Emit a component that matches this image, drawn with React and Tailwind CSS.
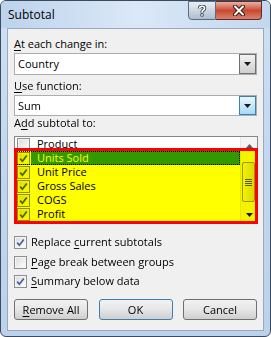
import React from "react";

// Win7-style "Subtotal" dialog with an annotation highlight over the list

const Mn = ({ children }) => <span className="underline underline-offset-[2px]">{children}</span>;

const CheckBox = ({ checked }) => (
  <span className="w-[13px] h-[13px] shrink-0 border border-[#8e8f8f] bg-white flex items-center justify-center">
    <span className="relative w-[11px] h-[11px] border border-[#f4f4f4] bg-gradient-to-br from-[#dedede] to-[#fbfbfb] flex items-center justify-center">
      {checked && (
        <svg width="9" height="9" viewBox="0 0 9 9" className="absolute">
          <polyline points="1.2,4.6 3.4,7.2 7.8,1.4" fill="none" stroke="#4a5f9a" strokeWidth="1.7" />
        </svg>
      )}
    </span>
  </span>
);

const Arrow = ({ up }) => (
  <svg width="7" height="4" viewBox="0 0 7 4">
    <polygon points={up ? "0,4 7,4 3.5,0" : "0,0 7,0 3.5,4"} fill={up ? "#5a5a5a" : "#1a1a1a"} />
  </svg>
);

const Combo = ({ value, focused, h }) => (
  <div className={`flex w-full bg-white border border-[#abadb3] ${h}`}>
    <div className="flex-1 flex items-center pl-[3px]">{value}</div>
    <div
      className={`w-[17px] flex items-center justify-center border ${
        focused
          ? "border-[#3c7fb1] bg-gradient-to-b from-[#eaf6fd] to-[#a7d9f5]"
          : "border-[#707070] bg-gradient-to-b from-[#f2f2f2] to-[#cfcfcf]"
      }`}
    >
      <Arrow />
    </div>
  </div>
);

const Btn = ({ children, primary }) => (
  <button
    className={`w-[74px] h-[21px] rounded-[3px] border ${
      primary ? "border-[#3c7fb1]" : "border-[#707070]"
    } bg-gradient-to-b from-[#f2f2f2] via-[#e6e6e6] to-[#cfcfcf] flex items-center justify-center`}
  >
    {children}
  </button>
);

const items = [
  { label: "Product", checked: false },
  { label: "Units Sold", checked: true, selected: true },
  { label: "Unit Price", checked: true },
  { label: "Gross Sales", checked: true },
  { label: "COGS", checked: true },
  { label: "Profit", checked: true },
];

const Option = ({ checked, children }) => (
  <div className="h-[14px] flex items-center gap-[4px]">
    <CheckBox checked={checked} />
    <span>{children}</span>
  </div>
);

export default function App() {
  return (
    <div className="w-[271px] h-[337px] flex flex-col rounded-[6px] border border-[#3b4a5c] bg-gradient-to-b from-[#cfe0f3] via-[#c2d7ee] to-[#bcd2ea] font-['Open_Sans',sans-serif] text-[11px] leading-[14px] text-black overflow-hidden">
      {/* title bar */}
      <div className="h-[27px] flex items-start justify-between pl-[7px] pr-[8px] bg-gradient-to-r from-[#bcd3ec] via-[#dbe8f7] to-[#c3d7ee]">
        <span className="pt-[7px] text-[12px]">Subtotal</span>
        <div className="flex h-[19px]">
          <div className="w-[28px] h-full border border-[#5b6b80] rounded-bl-[4px] bg-gradient-to-b from-[#e8edf3] via-[#ccd6e2] to-[#aebdcf] flex items-center justify-center">
            <svg width="10" height="12" viewBox="0 0 10 12">
              <path d="M2.5 3.6 C2.5 1.8 3.8 1.2 5 1.2 C6.6 1.2 7.6 2 7.6 3.3 C7.6 5.2 5 5.2 5 7.4" fill="none" stroke="#3b4656" strokeWidth="3.4" />
              <circle cx="5" cy="9.9" r="1.8" fill="#3b4656" />
              <path d="M2.5 3.6 C2.5 1.8 3.8 1.2 5 1.2 C6.6 1.2 7.6 2 7.6 3.3 C7.6 5.2 5 5.2 5 7.4" fill="none" stroke="#fff" strokeWidth="1.6" />
              <circle cx="5" cy="9.9" r="0.9" fill="#fff" />
            </svg>
          </div>
          <div className="w-[46px] h-full border border-l-0 border-[#5e2c24] rounded-br-[4px] bg-gradient-to-b from-[#eab0a2] via-[#c8472f] to-[#d9806d] flex items-center justify-center">
            <svg width="12" height="11" viewBox="0 0 12 11">
              <path d="M2 1.5 L10 9.5 M10 1.5 L2 9.5" stroke="#3a1a14" strokeWidth="4" strokeLinecap="round" />
              <path d="M2 1.5 L10 9.5 M10 1.5 L2 9.5" stroke="#fff" strokeWidth="2" strokeLinecap="round" />
            </svg>
          </div>
        </div>
      </div>

      {/* client area */}
      <div className="flex-1 mx-[6px] mb-[5px] border border-[#98aac0] bg-[#f0f0f0] flex flex-col pt-[8px] px-[6px]">
        <div>
          <Mn>A</Mn>t each change in:
        </div>
        <div className="mt-[2px]">
          <Combo value="Country" h="h-[22px]" />
        </div>
        <div className="mt-[4px]">
          <Mn>U</Mn>se function:
        </div>
        <div className="mt-[2px]">
          <Combo value="Sum" focused h="h-[21px]" />
        </div>
        <div>
          A<Mn>d</Mn>d subtotal to:
        </div>

        <div className="relative mt-[6px] w-[244px] h-[88px] border border-[#828790] bg-white flex">
          <div className="flex-1 flex flex-col pl-[1px]">
            {items.map((it) => (
              <div
                key={it.label}
                className={`h-[14px] flex items-center pl-[1px] ${
                  it.selected ? "outline-1 outline-dotted outline-black -outline-offset-1" : ""
                }`}
              >
                <CheckBox checked={it.checked} />
                <span
                  className={`ml-[1px] h-full flex-1 flex items-center pl-[6px] ${
                    it.selected ? "bg-[#3399ff] text-white" : ""
                  }`}
                >
                  {it.label}
                </span>
              </div>
            ))}
          </div>
          {/* scrollbar */}
          <div className="w-[17px] bg-[#f4f4f4] border-l border-[#e6e6e6] flex flex-col">
            <div className="h-[17px] flex items-center justify-center">
              <Arrow up />
            </div>
            <div className="flex-1 relative">
              <div className="absolute left-[1px] right-[2px] top-[8px] h-[40px] rounded-[2px] border border-[#979797] bg-gradient-to-r from-[#f3f3f3] to-[#d9d9d9] flex flex-col items-center justify-center gap-[1px]">
                <span className="w-[7px] h-px bg-[#5a5a5a]" />
                <span className="w-[7px] h-px bg-[#5a5a5a]" />
                <span className="w-[7px] h-px bg-[#5a5a5a]" />
                <span className="w-[7px] h-px bg-[#5a5a5a]" />
              </div>
            </div>
            <div className="h-[17px] flex items-center justify-center">
              <Arrow />
            </div>
          </div>

          {/* annotation highlight */}
          <div className="absolute -left-px -right-px top-[11px] -bottom-px bg-[#ffff00] mix-blend-multiply pointer-events-none" />
          <div className="absolute -left-px -right-px top-[11px] -bottom-px border-[3px] border-[#ff0000] pointer-events-none" />
        </div>

        <div className="mt-[11px] flex flex-col">
          <Option checked>
            Replace <Mn>c</Mn>urrent subtotals
          </Option>
          <div className="mt-[6px]">
            <Option>
              <Mn>P</Mn>age break between groups
            </Option>
          </div>
          <div className="mt-[5px]">
            <Option checked>
              <Mn>S</Mn>ummary below data
            </Option>
          </div>
        </div>

        <div className="mt-[11px] flex justify-between w-[243px]">
          <Btn>
            <Mn>R</Mn>emove All
          </Btn>
          <Btn primary>OK</Btn>
          <Btn>Cancel</Btn>
        </div>
      </div>
    </div>
  );
}
